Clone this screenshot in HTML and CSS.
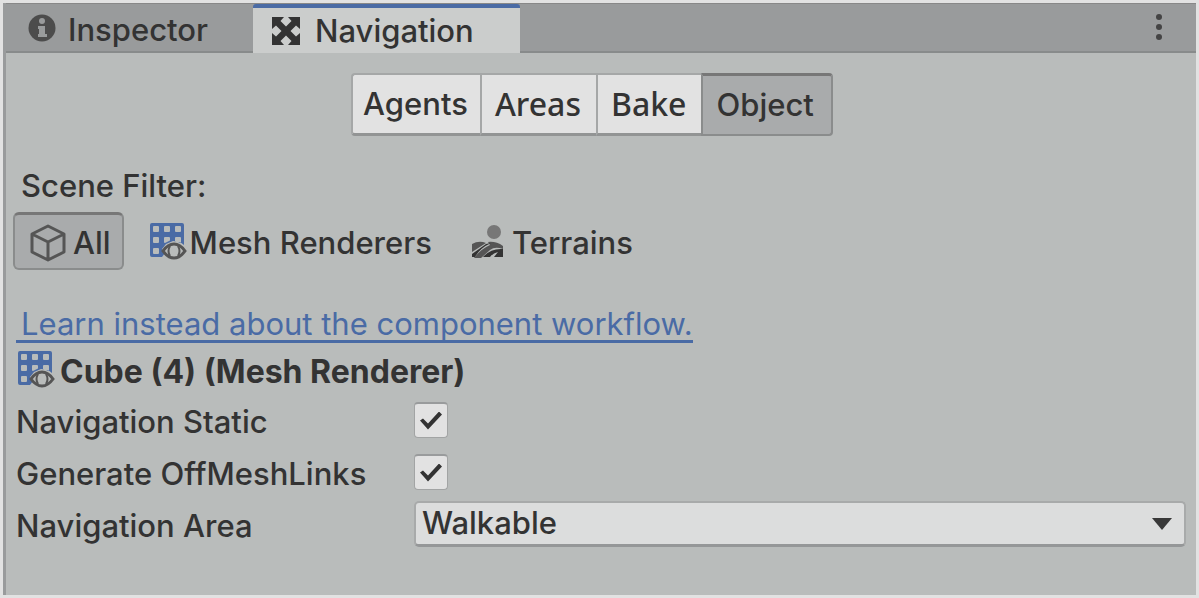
FILE: index.html
```html
<!DOCTYPE html>
<html lang="en">
<head>
<meta charset="utf-8">
<title>Navigation</title>
<link rel="stylesheet" href="styles.css">
</head>
<body>
<svg class="symbols" aria-hidden="true">
  <symbol id="mesh" viewBox="0 0 38 38">
    <path fill="#4a6ba5" fill-rule="evenodd" d="M3 1h30q2 0 2 2v20l-4-3-7-1-7 3-4 5 3 4-3 4H3q-2 0-2-2V3q0-2 2-2zM5 4q-1 0-1 1v4q0 1 1 1h4q1 0 1-1V5q0-1-1-1zM16 4q-1 0-1 1v4q0 1 1 1h4q1 0 1-1V5q0-1-1-1zM27 4q-1 0-1 1v4q0 1 1 1h4q1 0 1-1V5q0-1-1-1zM5 15q-1 0-1 1v4q0 1 1 1h4q1 0 1-1v-4q0-1-1-1zM16 15q-1 0-1 1v4q0 1 1 1l4-2q1 0 1-1v-2q0-1-1-1zM27 15q-1 0-1 1v3l6 2v-5q0-1-1-1zM5 26q-1 0-1 1v4q0 1 1 1h4q1 0 1-1v-4q0-1-1-1z"/>
    <path fill="#b9bcbb" stroke="#555" stroke-width="3" d="M14 29q5-7 11-7t11 7q-5 7-11 7t-11-7z"/>
    <path fill="none" stroke="#555" stroke-width="2" d="M21 24q-3 5 0 10M29 24q3 5 0 10"/>
  </symbol>
</svg>
<main class="panel">
  <header class="tabbar" role="tablist">
    <button class="tab" role="tab" aria-selected="false">
      <svg class="info" viewBox="0 0 28 28"><circle cx="14" cy="14" r="13.500" fill="#4c4c4c"/><circle cx="14" cy="7" r="3" fill="#999b9c"/><path fill="#999b9c" d="M10 12h7v8h2v3h-9v-3h1v-5h-1z"/></svg>
      Inspector
    </button>
    <button class="tab active" role="tab" aria-selected="true">
      <svg class="nav" viewBox="0 0 28 28" fill="#333"><path d="M0 0h12L8.500 4l5.500 5.500L19.500 4 16 0h12v12l-4-3.500-5.500 5.500 5.500 5.500 4-3.500v12H16l3.500-4-5.500-5.500L8.500 24l3.500 4H0V16l4 3.500L9.500 14 4 8.500 0 12z"/></svg>
      Navigation
    </button>
    <button class="more" aria-label="More options"><svg class="dots" viewBox="0 0 6 26" fill="#444"><circle cx="3" cy="3" r="3"/><circle cx="3" cy="13" r="3"/><circle cx="3" cy="23" r="3"/></svg></button>
  </header>
  <nav class="modes" aria-label="Navigation settings">
    <button class="mode">Agents</button>
    <button class="mode humanist">Areas</button>
    <button class="mode humanist">Bake</button>
    <button class="mode pressed" aria-pressed="true">Object</button>
  </nav>
  <section class="content">
    <h2 class="label">Scene Filter:</h2>
    <div class="filters">
      <button class="filter all" aria-pressed="true">
        <svg class="cube" viewBox="0 0 36 38" fill="none" stroke="#555" stroke-width="3" stroke-linejoin="round"><path d="M18 2l16 8v18l-16 8-16-8V10zM2 10l16 8 16-8M18 18v18"/></svg>
        All
      </button>
      <button class="filter"><svg class="mesh"><use href="#mesh"/></svg>Mesh Renderers</button>
      <button class="filter terrains">
        <svg class="terrain" viewBox="0 0 34 34"><circle cx="23" cy="8" r="7" fill="#777"/><path fill="#555" d="M1 20q7-4 14-1L1 28zM17 18q8-1 15 4v3q-8-3-13 1l-9 8H3q7-9 16-13z"/><path fill="#333" d="M1 30l14-10 5-1Q9 24 4 33H1zM12 33q8-9 20-8v8h-9l4-5q-5 1-8 5z"/></svg>
        Terrains
      </button>
    </div>
    <a class="link" href="#workflow">Learn instead about the component workflow.</a>
    <h3 class="object"><svg class="mesh"><use href="#mesh"/></svg>Cube (4) (Mesh Renderer)</h3>
    <div class="row"><label for="static">Navigation Static</label><input class="check" id="static" type="checkbox" checked></div>
    <div class="row"><label for="links">Generate OffMeshLinks</label><input class="check" id="links" type="checkbox" checked></div>
    <div class="row"><label for="area">Navigation Area</label>
      <div class="selectwrap"><select class="select" id="area"><option>Walkable</option><option>Not Walkable</option><option>Jump</option></select><svg class="arrow" viewBox="0 0 20 12"><path fill="#383838" d="M0 0h20L10 12z"/></svg></div>
    </div>
  </section>
</main>
</body>
</html>
```
FILE: styles.css
```css
* { box-sizing: border-box; }
body {
  margin: 0;
  padding: 3px;
  min-height: 100vh;
  display: flex;
  background: #e2e2e2;
  color: #333;
  font: 500 31px/40px Inter, "Liberation Sans", sans-serif;
}
button, select { font: inherit; color: inherit; margin: 0; }
.symbols { position: absolute; width: 0; height: 0; }
svg { display: block; flex: none; }
.panel {
  flex: 1;
  min-width: 0;
  background: #b9bcbb;
  border: solid #999b9c;
  border-width: 0 0 0 3px;
}
.tabbar {
  display: flex;
  height: 50px;
  background: #999b9c;
  border-top: 1px solid #888;
  border-bottom: 2px solid #888b8b;
}
.tab {
  display: flex;
  align-items: center;
  gap: 12px;
  width: 247px;
  padding: 4px 0 0 22px;
  border: 0;
  background: none;
  white-space: nowrap;
}
.tab.active {
  gap: 15px;
  width: 267px;
  height: 49px;
  padding: 0 0 0 19px;
  background: #cbcdcc;
  border-top: 4px solid #4a6ba5;
  border-radius: 3px 3px 0 0;
}
.info, .nav { width: 28px; height: 28px; }
.info { margin-top: -4px; }
.more { margin-left: auto; padding: 0 34px 2px 0; border: 0; background: none; }
.dots { width: 6px; height: 26px; }
.modes { display: flex; justify-content: center; padding: 20px 18px 0 0; }
.mode {
  height: 63px;
  min-width: 105px;
  padding: 0 12px 0 10px;
  border: 2px solid #a5a7a7;
  border-right-width: 0;
  border-bottom: 3px solid #929494;
  background: #e2e2e2;
}
.mode:first-child { border-radius: 4px 0 0 4px; }
.mode.humanist {
  padding: 0 15px 0 13px;
  font-family: "Noto Sans", "Open Sans", sans-serif;
  font-size: 32px;
}
.mode.pressed {
  padding: 0 17px 0 13px;
  background: #a9abac;
  border: 2px solid #8a8c8c;
  border-top: 3px solid #777;
  border-radius: 0 4px 4px 0;
}
.content { padding: 30px 10px 0; }
h2, h3 { margin: 0; font-size: inherit; }
.label { padding-left: 5px; font-weight: 500; }
.filters { display: flex; align-items: center; margin-top: 6px; margin-left: -3px; }
.filter {
  display: flex;
  align-items: center;
  height: 58px;
  padding: 4px 0 0;
  border: 0;
  background: none;
}
.filter .mesh, .filter .terrain { margin-top: -4px; }
.filter.all {
  gap: 7px;
  margin-right: 25px;
  padding: 2px 11px 0 15px;
  border: 2px solid #8a8c8c;
  border-top: 3px solid #777;
  border-radius: 6px;
  background: #a9abac;
}
.filter.terrains { gap: 7px; margin-left: 39px; }
.cube { width: 36px; height: 38px; }
.mesh { width: 38px; height: 38px; margin-right: 3px; }
.terrain { width: 34px; height: 34px; }
.link {
  display: block;
  width: max-content;
  height: 39px;
  margin-top: 34px;
  padding: 0 0 0 5px;
  color: #4a6ba5;
  font-weight: 400;
  border-bottom: 3px solid #4a6ba5;
  text-decoration: none;
}
.object { display: flex; align-items: center; height: 51px; padding-top: 6px; font-size: 32px; font-weight: 700; }
.object .mesh { margin: -6px 5px 0 1px; }
.row { display: grid; grid-template-columns: 398px 1fr; align-items: center; height: 52px; }
.row label { padding-top: 3px; }
.check {
  appearance: none;
  width: 34px;
  height: 36px;
  margin: 0;
  border: 1px solid #a2a4a4;
  border-top: 2px solid #999b9c;
  border-radius: 4px;
  background: #e2e2e2;
  display: grid;
  place-items: center;
}
.check::before {
  content: "";
  width: 22px;
  height: 18px;
  background: #333;
  clip-path: polygon(0 9px, 3px 7px, 8px 12px, 19px 0, 22px 3px, 8px 18px);
}
.selectwrap { display: grid; align-items: center; }
.select {
  grid-area: 1 / 1;
  appearance: none;
  width: 100%;
  height: 46px;
  padding: 0 30px 1px 6px;
  border: 2px solid #a8aaaa;
  border-bottom: 3px solid #959798;
  border-radius: 5px;
  background: #dcdddd;
}
.arrow { grid-area: 1 / 1; justify-self: end; width: 20px; height: 12px; margin-right: 14px; pointer-events: none; }
```
